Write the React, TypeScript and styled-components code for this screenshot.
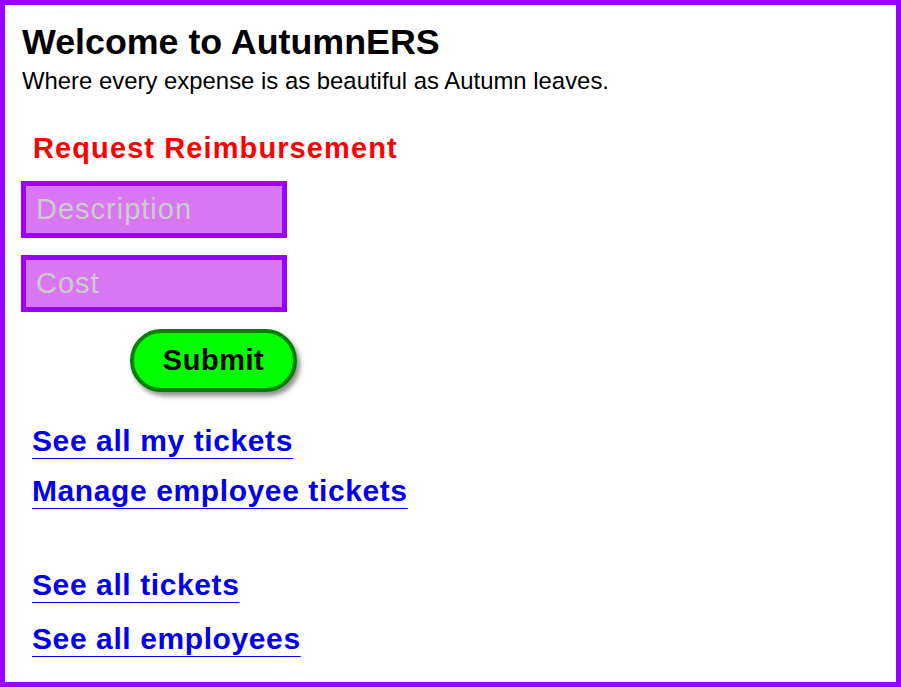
import React from "react";
import styled, { createGlobalStyle } from "styled-components";

const Global = createGlobalStyle`
  html, body { margin: 0; padding: 0; background: #fff; }
  body { font-family: "Liberation Sans", Arial, Helvetica, sans-serif; }
  * { box-sizing: border-box; }
`;

const Frame = styled.div`
  width: 901px;
  height: 687px;
  border: 5px solid #9900ff;
  padding: 17px 0 0 17px;
  overflow: hidden;
`;

const Title = styled.h1`
  margin: 0;
  font-size: 35.8px;
  line-height: 40px;
  font-weight: 700;
  color: #000;
`;

const Subtitle = styled.p`
  margin: 4px 0 0;
  font-size: 23.9px;
  line-height: 30px;
  color: #000;
`;

const Form = styled.form`
  display: flex;
  flex-direction: column;
  align-items: flex-start;
  margin-top: 35px;
`;

const FormTitle = styled.h2`
  margin: 0 0 16px 11px;
  font-size: 29px;
  line-height: 34px;
  font-weight: 700;
  letter-spacing: 1.1px;
  color: #ff0000;
`;

const Field = styled.input`
  width: 266px;
  height: 57px;
  margin: 0 0 17px -1px;
  padding: 0 10px;
  border: 5px solid #9900ff;
  background: #d977f2;
  font-family: "Liberation Sans", Arial, sans-serif;
  font-size: 29px;
  letter-spacing: 1px;
  color: #333;
  outline: none;
  &::placeholder { color: #cccccc; }
`;

const SubmitButton = styled.button`
  margin: 0 0 0 108px;
  width: 167px;
  height: 63px;
  border: 4px solid #008000;
  border-radius: 32px;
  background: #00ff00;
  box-shadow: 3px 4px 5px rgba(0, 0, 0, 0.45);
  font-family: "Liberation Sans", Arial, sans-serif;
  font-size: 29px;
  font-weight: 700;
  letter-spacing: 0.5px;
  color: #000;
  cursor: pointer;
`;

const LinkGroup = styled.nav<{ $gap: number; $line: number }>`
  display: flex;
  flex-direction: column;
  align-items: flex-start;
  margin: ${(p) => p.$gap}px 0 0 10px;
  line-height: ${(p) => p.$line}px;
`;

const NavLink = styled.a`
  font-size: 30px;
  font-weight: 700;
  letter-spacing: 0.6px;
  color: #0000ee;
  text-decoration: underline;
  text-decoration-thickness: 1px;
  text-underline-offset: 7px;
`;

export default function App() {
  return (
    <>
      <Global />
      <Frame>
        <Title>Welcome to AutumnERS</Title>
        <Subtitle>Where every expense is as beautiful as Autumn leaves.</Subtitle>
        <Form onSubmit={(e) => e.preventDefault()}>
          <FormTitle>Request Reimbursement</FormTitle>
          <Field placeholder="Description" />
          <Field placeholder="Cost" />
          <SubmitButton type="submit">Submit</SubmitButton>
        </Form>
        <LinkGroup $gap={24} $line={50}>
          <NavLink href="#">See all my tickets</NavLink>
          <NavLink href="#">Manage employee tickets</NavLink>
        </LinkGroup>
        <LinkGroup $gap={42} $line={54}>
          <NavLink href="#">See all tickets</NavLink>
          <NavLink href="#">See all employees</NavLink>
        </LinkGroup>
      </Frame>
    </>
  );
}
